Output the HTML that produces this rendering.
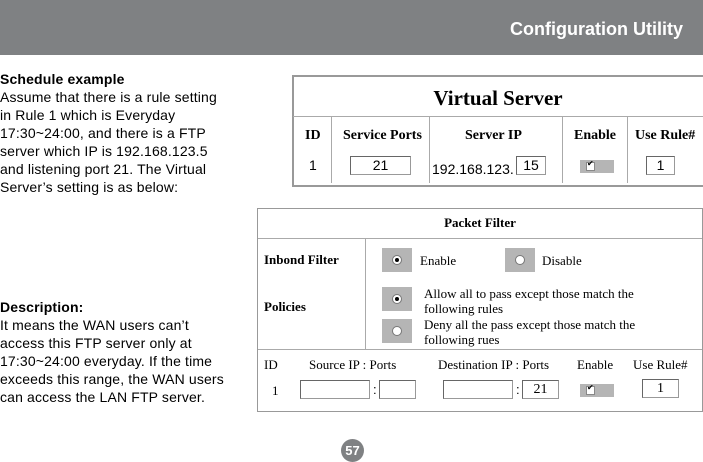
<!DOCTYPE html>
<html><head><style>
body{margin:0;width:703px;height:462px;position:relative;background:#fff;overflow:hidden;font-family:"Liberation Sans",Arial,sans-serif}
.hdr{position:absolute;left:0;top:0;width:703px;height:55px;background:#7f8183}
.hdr span{position:absolute;right:20px;top:19px;color:#fff;font-weight:bold;font-size:18px}
.txt{position:absolute;left:0;font-size:14px;line-height:18px;color:#000;white-space:nowrap;letter-spacing:0.15px}
.a{position:absolute}
.s{font-family:"Liberation Serif",serif}
.box{position:absolute;border:1px solid #999;background:#fff}
.inp{position:absolute;border:1px solid #999;border-top-color:#666;border-left-color:#666;background:#fff;height:19px;box-sizing:border-box;font-size:14px;text-align:center;line-height:17px}
.chk{position:absolute;background:#b5b5b5;width:34px;height:13px}
.chk:before{content:"";position:absolute;left:6px;top:2px;width:9px;height:9px;background:#fff;border:1px solid #888;box-sizing:border-box}
.chk:after{content:"✔";position:absolute;left:7px;top:-1px;font-size:8px}
.rad{position:absolute;background:#b5b5b5;width:30px;height:24px}
.rad i{position:absolute;left:10px;top:7px;width:10px;height:10px;border-radius:50%;background:#fff;border:1px solid #777;box-sizing:border-box}
.rad i.on:after{content:"";position:absolute;left:2px;top:2px;width:4px;height:4px;border-radius:50%;background:#000}
.vl{position:absolute;width:1px;background:#aaa}
.hl{position:absolute;height:1px;background:#aaa}
</style></head><body>
<div class="hdr"><span>Configuration Utility</span></div>
<div class="txt" style="top:70px"><b>Schedule example</b><br>Assume that there is a rule setting<br>in Rule 1 which is Everyday<br>17:30~24:00, and there is a FTP<br>server which IP is 192.168.123.5<br>and listening port 21. The Virtual<br>Server’s setting is as below:</div>
<div class="txt" style="top:298px"><b>Description:</b><br>It means the WAN users can’t<br>access this FTP server only at<br>17:30~24:00 everyday. If the time<br>exceeds this range, the WAN users<br>can access the LAN FTP server.</div>

<div class="box" style="left:292px;top:75px;width:414px;height:108px;border-width:2px"></div>
<div class="hl" style="left:293px;top:116px;width:410px"></div>
<div class="vl" style="left:331px;top:117px;height:66px"></div>
<div class="vl" style="left:429px;top:117px;height:66px"></div>
<div class="vl" style="left:562px;top:117px;height:66px"></div>
<div class="vl" style="left:627px;top:117px;height:66px"></div>
<div class="a s" style="left:292px;width:412px;top:86px;text-align:center;font-size:21px;font-weight:bold">Virtual Server</div>
<div class="a s" style="left:305px;top:128px;font-size:14px;font-weight:bold">ID</div>
<div class="a s" style="left:343px;top:128px;font-size:14px;font-weight:bold">Service Ports</div>
<div class="a s" style="left:465px;top:128px;font-size:14px;font-weight:bold">Server IP</div>
<div class="a s" style="left:574px;top:128px;font-size:14px;font-weight:bold">Enable</div>
<div class="a s" style="left:635px;top:128px;font-size:14px;font-weight:bold">Use Rule#</div>
<div class="a" style="left:309px;top:157px;font-size:14px">1</div>
<div class="inp" style="left:350px;top:156px;width:61px">21</div>
<div class="a" style="left:432px;top:161px;font-size:14px">192.168.123.</div>
<div class="inp" style="left:516px;top:156px;width:30px">15</div>
<div class="chk" style="left:580px;top:160px"></div>
<div class="inp" style="left:646px;top:156px;width:29px">1</div>

<div class="box" style="left:257px;top:208px;width:444px;height:202px"></div>
<div class="hl" style="left:258px;top:238px;width:444px"></div>
<div class="hl" style="left:258px;top:349px;width:444px"></div>
<div class="vl" style="left:365px;top:239px;height:110px"></div>
<div class="a s" style="left:258px;width:444px;top:215px;text-align:center;font-size:13px;font-weight:bold">Packet Filter</div>
<div class="a s" style="left:264px;top:252px;font-size:13px;font-weight:bold">Inbond Filter</div>
<div class="a s" style="left:264px;top:299px;font-size:13px;font-weight:bold">Policies</div>
<div class="rad" style="left:382px;top:248px"><i class="on"></i></div>
<div class="a s" style="left:420px;top:253px;font-size:13px">Enable</div>
<div class="rad" style="left:505px;top:248px"><i></i></div>
<div class="a s" style="left:542px;top:253px;font-size:13px">Disable</div>
<div class="rad" style="left:382px;top:287px"><i class="on"></i></div>
<div class="a s" style="left:424px;top:286px;font-size:13px;line-height:15px">Allow all to pass except those match the<br>following rules</div>
<div class="rad" style="left:382px;top:319px"><i></i></div>
<div class="a s" style="left:424px;top:317px;font-size:13px;line-height:15px">Deny all the pass except those match the<br>following rues</div>
<div class="a s" style="left:264px;top:357px;font-size:13px">ID</div>
<div class="a s" style="left:309px;top:357px;font-size:13px">Source IP : Ports</div>
<div class="a s" style="left:438px;top:357px;font-size:13px">Destination IP : Ports</div>
<div class="a s" style="left:577px;top:357px;font-size:13px">Enable</div>
<div class="a s" style="left:633px;top:357px;font-size:13px">Use Rule#</div>
<div class="a s" style="left:272px;top:383px;font-size:13px">1</div>
<div class="inp" style="left:300px;top:380px;width:70px"></div>
<div class="a" style="left:373px;top:382px;font-size:13px">:</div>
<div class="inp" style="left:379px;top:380px;width:37px"></div>
<div class="inp" style="left:443px;top:380px;width:70px"></div>
<div class="a" style="left:516px;top:382px;font-size:13px">:</div>
<div class="inp s" style="left:522px;top:380px;width:37px">21</div>
<div class="chk" style="left:580px;top:384px"></div>
<div class="inp s" style="left:642px;top:379px;width:37px">1</div>

<div class="a" style="left:341px;top:439px;width:23px;height:23px;border-radius:50%;background:#7f8183;color:#fff;font-weight:bold;font-size:13px;text-align:center;line-height:23px">57</div>
</body></html>
